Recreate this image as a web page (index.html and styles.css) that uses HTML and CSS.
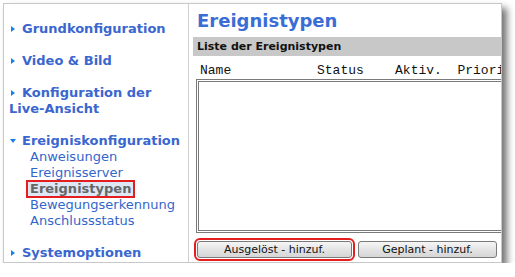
FILE: index.html
```html
<!DOCTYPE html>
<html>
<head>
  <title>Ereignistypen</title>
  <link rel="stylesheet" href="styles.css">
</head>
<body>
  <div class="frame">
    <div class="nav">
      <div class="group">
        <a class="head" href="#"><span class="arrow"></span>Grundkonfiguration</a>
      </div>
      <div class="group">
        <a class="head" href="#"><span class="arrow"></span>Video &amp; Bild</a>
      </div>
      <div class="group">
        <a class="head" href="#"><span class="arrow"></span>Konfiguration der<br>Live-Ansicht</a>
      </div>
      <div class="group">
        <a class="head" href="#"><span class="arrow down"></span>Ereigniskonfiguration</a>
        <a class="sub" href="#">Anweisungen</a>
        <a class="sub" href="#">Ereignisserver</a>
        <a class="sub"><span class="active">Ereignistypen</span></a>
        <a class="sub" href="#">Bewegungserkennung</a>
        <a class="sub" href="#">Anschlussstatus</a>
      </div>
      <div class="group">
        <a class="head" href="#"><span class="arrow"></span>Systemoptionen</a>
      </div>
    </div>
    <div class="main">
      <h1>Ereignistypen</h1>
      <div class="bar">Liste der Ereignistypen</div>
      <div class="cols">Name           Status    Aktiv.  Priorität</div>
      <div class="listbox"></div>
      <div class="buttons">
        <button class="btn marked">Ausgelöst - hinzuf.</button>
        <button class="btn second">Geplant - hinzuf.</button>
      </div>
    </div>
  </div>
</body>
</html>
```

FILE: styles.css
```css
body {
  margin: 0;
  background: #ffffff;
  font-family: "DejaVu Sans", Verdana, sans-serif;
}

.frame {
  margin: 3px 0 0 3px;
  width: 497px;
  height: 258px;
  border: 1px solid #c8c8c8;
  box-shadow: 5px 5px 7px rgba(0, 0, 0, 0.55);
  display: flex;
  overflow: hidden;
  background: #ffffff;
}

.nav {
  width: 179px;
  flex: none;
  padding: 17px 0 0 5px;
  border-right: 1px solid #d0d0d0;
  display: flex;
  flex-direction: column;
  gap: 16px;
}

.group {
  display: flex;
  flex-direction: column;
}

.nav a {
  text-decoration: none;
  font-size: 13px;
  line-height: 16px;
  white-space: nowrap;
}

.head {
  color: #3a66cf;
  font-weight: bold;
}

/* little blue triangles in front of the sections */
.arrow {
  display: inline-block;
  width: 0;
  height: 0;
  margin: 0 7px 1px 2px;
  border-top: 3px solid transparent;
  border-bottom: 3px solid transparent;
  border-left: 4px solid #1a7ff0;
}

.arrow.down {
  margin: 0 6px 2px 1px;
  border-left: 3px solid transparent;
  border-right: 3px solid transparent;
  border-top: 4px solid #1a7ff0;
  border-bottom: 0;
}

.sub {
  color: #3366cc;
  padding-left: 21px;
}

.active {
  display: inline-block;
  margin-left: -3px;
  padding: 0 3px;
  color: #666666;
  font-weight: bold;
  background: #dde7f5;
  outline: 2px solid #e41e1e;
  outline-offset: -1px;
}

.main {
  flex: 1;
  padding-left: 4px;
  overflow: hidden;
  display: flex;
  flex-direction: column;
}

h1 {
  margin: 5px 0 0 4px;
  font-size: 18px;
  line-height: 24px;
  color: #3a6dd6;
}

.bar {
  margin-top: 4px;
  height: 19px;
  line-height: 19px;
  padding-left: 4px;
  background: #c8c8c8;
  font-size: 11px;
  font-weight: bold;
  color: #111111;
  white-space: nowrap;
}

.cols {
  margin-top: 6px;
  padding-left: 7px;
  font-family: "Liberation Mono", "Courier New", monospace;
  font-size: 13px;
  line-height: 17px;
  white-space: pre;
  color: #111111;
}

.listbox {
  margin-left: 3px;
  width: 340px;
  height: 148px;
  border: 3px double #7a7a7a;
  flex: none;
}

.buttons {
  margin-top: 8px;
  padding-left: 4px;
  display: flex;
  gap: 6px;
}

.btn {
  height: 17px;
  padding: 0;
  border: 1px solid #7a7a7a;
  border-radius: 3px;
  background: linear-gradient(#f6f6f6, #e4e4e4 50%, #d6d6d6);
  font-family: "DejaVu Sans", Tahoma, sans-serif;
  font-size: 11px;
  line-height: 15px;
  color: #111111;
}

.marked {
  width: 155px;
  outline: 2px solid #e41e1e;
  outline-offset: 1px;
}

.second {
  width: 139px;
}
```
